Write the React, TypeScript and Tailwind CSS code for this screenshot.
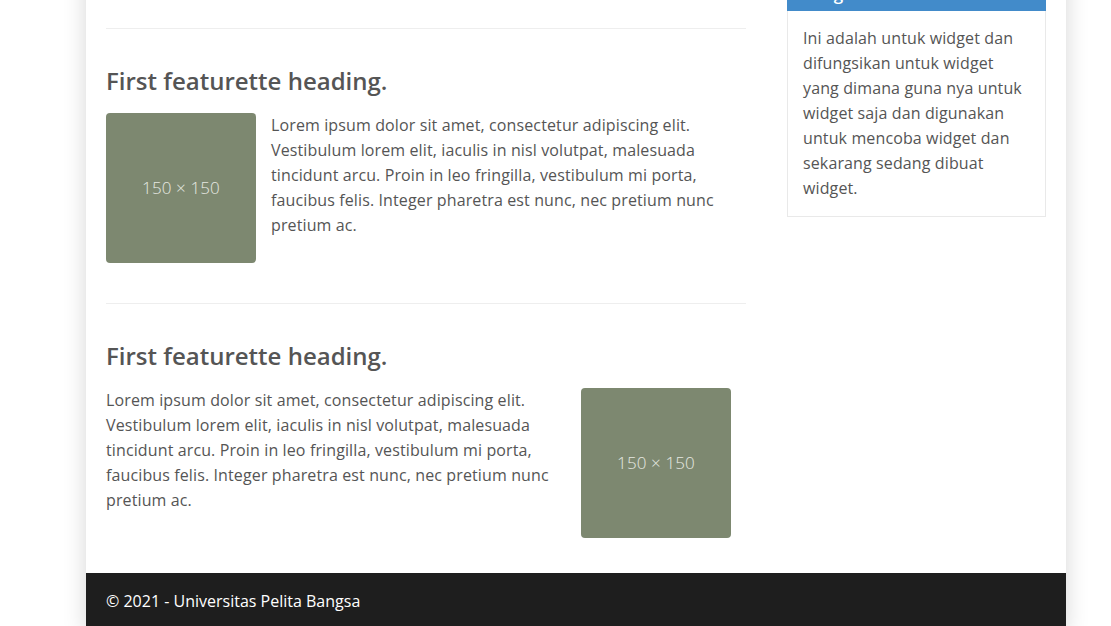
export default function App() {
  const lorem =
    "Lorem ipsum dolor sit amet, consectetur adipiscing elit. Vestibulum lorem elit, iaculis in nisl volutpat, malesuada tincidunt arcu. Proin in leo fringilla, vestibulum mi porta, faucibus felis. Integer pharetra est nunc, nec pretium nunc pretium ac.";
  const Placeholder = () => (
    <div className="w-[150px] h-[150px] shrink-0 rounded-[4px] bg-[#7d8870] flex items-center justify-center text-[#e6e9e2] text-[17px] font-light">
      150 × 150
    </div>
  );
  return (
    <div
      className="min-h-screen bg-white text-[#555] overflow-hidden"
      style={{ fontFamily: '"Open Sans", "Noto Sans", sans-serif' }}
    >
      <div className="ml-[86px] w-[980px] -mt-[30px] bg-white shadow-[0_0_22px_rgba(0,0,0,0.16)]">
        <div className="flex px-[20px] gap-[41px]">
          <main className="w-[640px] pt-[58px] pb-[35px] tracking-[0.12px]">
            <hr className="border-0 border-t border-[#eee]" />
            <section className="pt-[39px] pb-[40px]">
              <h2 className="text-[24px] leading-[26px] font-semibold text-[#555] mb-[19px] tracking-normal">
                First featurette heading.
              </h2>
              <div className="flex gap-[15px] pr-[15px]">
                <Placeholder />
                <p className="text-[16px] leading-[25px]">{lorem}</p>
              </div>
            </section>
            <hr className="border-0 border-t border-[#eee]" />
            <section className="pt-[39px]">
              <h2 className="text-[24px] leading-[26px] font-semibold text-[#555] mb-[19px] tracking-normal">
                First featurette heading.
              </h2>
              <div className="flex gap-[15px] pr-[15px]">
                <p className="text-[16px] leading-[25px] w-[460px]">{lorem}</p>
                <Placeholder />
              </div>
            </section>
          </main>
          <aside className="w-[259px] tracking-[0.12px]">
            <div className="border border-[#e9e9e9]">
              <div className="bg-[#428bca] text-white px-[15px] pt-[14px] pb-[7px] text-[17px] leading-[20px] font-semibold -mx-px -mt-px">
                Widget
              </div>
              <div className="px-[15px] pt-[15px] pb-[15px] text-[16px] leading-[25px]">
                Ini adalah untuk widget dan difungsikan untuk widget yang dimana guna nya untuk widget saja dan digunakan untuk mencoba widget dan sekarang sedang dibuat widget.
              </div>
            </div>
          </aside>
        </div>
        <footer className="bg-[#1e1e1e] text-white px-[20px] pt-[16px] pb-[20px] text-[16px] leading-[25px]">
          © 2021 - Universitas Pelita Bangsa
        </footer>
      </div>
    </div>
  );
}
